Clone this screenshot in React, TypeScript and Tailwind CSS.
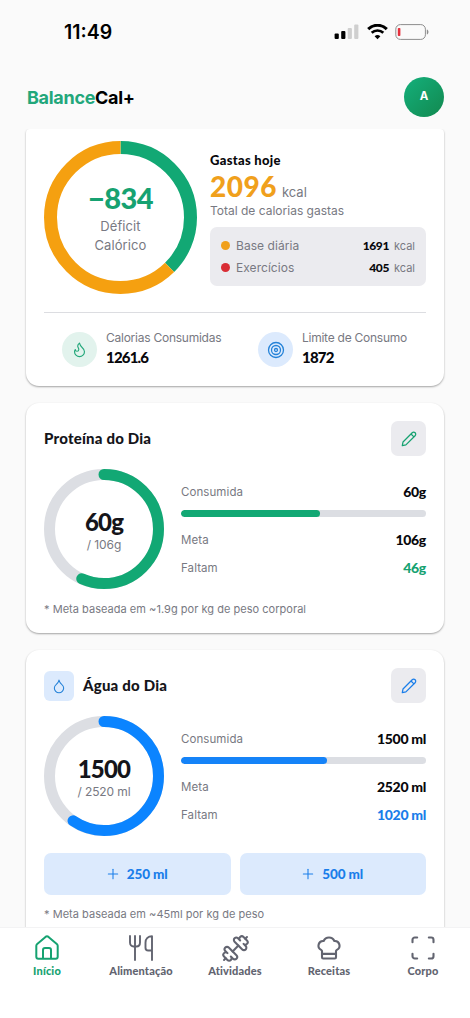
import { FC, ReactNode } from 'react'
import { ChefHat, Droplet, Dumbbell, Flame, Plus, Scan, Target } from 'lucide-react'
import clsx from 'clsx'

interface RingSegment {
  color: string
  from: number
  to: number
}

interface RingProps {
  size: number
  stroke: number
  segments: RingSegment[]
  track?: string
  rounded?: boolean
  children: ReactNode
}

const Ring: FC<RingProps> = ({ size, stroke, segments, track, rounded, children }) => {
  const radius = (size - stroke) / 2
  const length = 2 * Math.PI * radius

  return (
    <div className="relative shrink-0">
      <svg width={size} height={size} className="block -rotate-90">
        {track && <circle cx={size / 2} cy={size / 2} r={radius} fill="none" stroke={track} strokeWidth={stroke} />}
        {segments.map(segment => (
          <circle
            key={segment.color}
            cx={size / 2}
            cy={size / 2}
            r={radius}
            fill="none"
            stroke={segment.color}
            strokeWidth={stroke}
            strokeLinecap={rounded ? 'round' : 'butt'}
            strokeDasharray={`${(segment.to - segment.from) * length} ${length}`}
            strokeDashoffset={-segment.from * length}
          />
        ))}
      </svg>
      <div className="absolute inset-0 flex flex-col items-center justify-center">{children}</div>
    </div>
  )
}

const PencilIcon: FC = () => (
  <svg width="18" height="18" viewBox="0 0 18 18" fill="none" stroke="currentColor" strokeWidth="1.25" strokeLinejoin="round">
    <path d="M2.3 15.7l.7-3.7L12.2 2.8a2.05 2.05 0 0 1 2.9 2.9L5.9 14.9zM11 4l2.9 2.9" />
  </svg>
)

const HomeIcon: FC = () => (
  <svg width="26" height="26" viewBox="0 0 26 26" fill="none" stroke="currentColor" strokeWidth="2" strokeLinejoin="round">
    <path d="M2.3 10.8c0-.8.3-1.4.9-1.9l8.3-7c.9-.7 2.1-.7 3 0l8.3 7c.6.5.9 1.1.9 1.9v11a2 2 0 0 1-2 2H4.3a2 2 0 0 1-2-2z" />
    <path d="M9 23.8v-8.8a2 2 0 0 1 2-2h4a2 2 0 0 1 2 2v8.8" />
  </svg>
)

const CutleryIcon: FC = () => (
  <svg width="26" height="26" viewBox="0 0 26 26" fill="none" stroke="currentColor" strokeWidth="1.9" strokeLinecap="round" strokeLinejoin="round">
    <path d="M2 1v6.5c0 2.4 1.5 4 3.6 4h2.8c2.1 0 3.6-1.6 3.6-4V1M7 1v24" />
    <path d="M24 25V1.2c-3.8 0-6.5 2.5-6.5 6.5v5c0 1.7 1 2.8 2.7 2.8H24" />
  </svg>
)

const StatusBar: FC = () => (
  <div className="flex h-[66px] shrink-0 items-center justify-between pl-16 pr-10 pb-px">
    <span className="text-[19.5px] font-semibold tracking-[0px] text-black">11:49</span>
    <div className="flex items-center gap-2 pb-0.5">
      <svg width="25" height="16" viewBox="0 0 25 16">
        <rect x="0.6" y="9.5" width="4.2" height="5.5" rx="1" fill="#000" />
        <rect x="7.2" y="7" width="4.2" height="8" rx="1" fill="#000" />
        <rect x="13.7" y="4" width="4.2" height="11" rx="1" fill="#cfcfcf" />
        <rect x="20.2" y="0.5" width="4.2" height="14.5" rx="1" fill="#cfcfcf" />
      </svg>
      <svg width="21" height="16" viewBox="0 0 21 16" fill="none" stroke="#000">
        <path d="M1.2 5.1a13.2 13.2 0 0 1 18.6 0" strokeWidth="3" />
        <path d="M4.7 8.8a8.4 8.4 0 0 1 11.6 0" strokeWidth="2.7" />
        <path d="M10.5 15.2l-2.9-2.9a4.2 4.2 0 0 1 5.8 0z" fill="#000" stroke="none" />
      </svg>
      <svg width="35" height="16" viewBox="0 0 35 16" className="-ml-px">
        <rect x="0.8" y="0.6" width="29.6" height="14.8" rx="4.6" fill="none" stroke="#8d8d8d" />
        <rect x="2.8" y="4" width="2.6" height="8" rx="0.8" fill="#e5303c" />
        <path d="M31.8 5.5c2.2.6 2.2 4.4 0 5z" fill="#8d8d8d" />
      </svg>
    </div>
  </div>
)

interface ExpenseProps {
  color: string
  label: string
  value: string
}

const Expense: FC<ExpenseProps> = ({ color, label, value }) => (
  <div className="flex h-[22px] items-center">
    <span className={clsx('mr-[6px] size-[9px] rounded-full', color)} />
    <span className="grow text-xs tracking-[0.05px] text-[#787982]">{label}</span>
    <span className="mr-[5px] font-['Lato',sans-serif] text-xs font-black tracking-[-0.4px] text-[#08080c]">{value}</span>
    <span className="pt-px text-[11px] tracking-[0px] text-[#787982]">kcal</span>
  </div>
)

interface StatProps {
  icon: ReactNode
  iconClass: string
  label: string
  value: string
}

const Stat: FC<StatProps> = ({ icon, iconClass, label, value }) => (
  <div className="flex w-[196px] shrink-0 items-center gap-[9px]">
    <span className={clsx('flex size-[35px] items-center justify-center rounded-full', iconClass)}>{icon}</span>
    <div className="-mt-[3px]">
      <p className="text-[12px] leading-[18px] tracking-[-0.25px] text-[#787982]">{label}</p>
      <p className="font-['Lato',sans-serif] text-[15px] leading-5 font-black tracking-[-0.8px] text-[#08080c]">{value}</p>
    </div>
  </div>
)

const BalanceCard: FC = () => (
  <section className="h-[257px] shrink-0 rounded-t-[4px] rounded-b-[13px] bg-white px-[18px] pt-3 shadow-[0_1px_2px_rgba(0,0,0,0.35)]">
    <div className="flex gap-[13px]">
      <Ring
        size={153}
        stroke={13}
        segments={[
          { color: '#12a874', from: 0, to: 0.3757 },
          { color: '#f5a010', from: 0.3757, to: 1 },
        ]}>
        <span className="mt-[2px] font-['Lato',sans-serif] text-[29px] leading-[32px] font-black tracking-[-0.6px] text-[#16a271]">
          −834
        </span>
        <span className="mt-[3px] text-center text-[13px] leading-[19px] tracking-[0.1px] text-[#787982]">
          Déficit
          <br />
          Calórico
        </span>
      </Ring>
      <div className="grow pt-2.5">
        <h2 className="font-['Lato',sans-serif] text-[13px] leading-[18px] font-black tracking-[0.3px] text-[#08080c]">
          Gastas hoje
        </h2>
        <p className="flex h-[33px] items-baseline gap-[5px]">
          <span className="font-['Lato',sans-serif] text-[28px] leading-[34px] font-black tracking-[0.5px] text-[#f0a01c]">2096</span>
          <span className="text-[13px] tracking-[0px] text-[#787982]">kcal</span>
        </p>
        <p className="text-xs leading-[18px] tracking-[0px] text-[#787982]">Total de calorias gastas</p>
        <div className="mt-[7px] h-[59px] rounded-[7px] bg-[#ebebef] px-[11px] py-[7.5px]">
          <Expense color="bg-[#f0a01c]" label="Base diária" value="1691" />
          <Expense color="bg-[#d92d35]" label="Exercícios" value="405" />
        </div>
      </div>
    </div>
    <div className="mt-[18px] flex border-t border-[#dcdde1] pt-[19px] pl-[18px]">
      <Stat
        icon={<Flame size={17} strokeWidth={1.6} />}
        iconClass="bg-[#e2f3ed] text-[#22a77a]"
        label="Calorias Consumidas"
        value="1261.6"
      />
      <Stat
        icon={<Target size={18} strokeWidth={1.7} />}
        iconClass="bg-[#dceafd] text-[#2482d8]"
        label="Limite de Consumo"
        value="1872"
      />
    </div>
  </section>
)

interface GoalRowProps {
  label: string
  value: string
  valueClass?: string
}

const GoalRow: FC<GoalRowProps> = ({ label, value, valueClass = 'text-[#08080c]' }) => (
  <div className="flex h-7 items-center justify-between">
    <span className="pt-px text-[11.5px] tracking-[0.08px] text-[#787982]">{label}</span>
    <span className={clsx("pb-[2px] font-['Lato',sans-serif] text-[14px] font-black tracking-[-0.3px]", valueClass)}>
      {value}
    </span>
  </div>
)

interface GoalProps {
  color: string
  barClass: string
  accentClass: string
  value: number
  goal: number
  unit: string
  ringValue: string
  ringGoal: string
}

const Goal: FC<GoalProps> = ({ color, barClass, accentClass, value, goal, unit, ringValue, ringGoal }) => (
  <div className="mt-[13px] flex gap-[17px]">
    <Ring size={120} stroke={11} track="#dcdee3" rounded segments={[{ color, from: 0, to: value / goal }]}>
      <span className="mt-[5px] font-['Lato',sans-serif] text-[24px] leading-[26px] font-black tracking-[-0.8px] text-[#15151a]">
        {ringValue}
      </span>
      <span className="mt-px text-[12px] leading-[18px] tracking-[-0.1px] text-[#787982]">{ringGoal}</span>
    </Ring>
    <div className="grow pt-[9px]">
      <GoalRow label="Consumida" value={`${value}${unit}`} />
      <div className="mt-[4px] mb-[9.5px] h-[6.5px] overflow-hidden rounded-full bg-[#dcdee3]">
        <div className={clsx('h-full rounded-full', barClass)} style={{ width: `${(value / goal) * 100}%` }} />
      </div>
      <GoalRow label="Meta" value={`${goal}${unit}`} />
      <GoalRow label="Faltam" value={`${goal - value}${unit}`} valueClass={accentClass} />
    </div>
  </div>
)

const ProteinCard: FC = () => (
  <section className="mt-[17px] h-[230px] shrink-0 rounded-[13px] bg-white px-[18px] pt-[18px] shadow-[0_1px_2px_rgba(0,0,0,0.35)]">
    <div className="flex items-center justify-between">
      <h2 className="font-['Lato',sans-serif] text-[15px] font-black tracking-[0.2px] text-[#15151a]">Proteína do Dia</h2>
      <button className="flex size-[35px] items-center justify-center rounded-[7px] bg-[#ebebef] text-[#16a271]">
        <PencilIcon />
      </button>
    </div>
    <Goal
      color="#12a874"
      barClass="bg-[#12a874]"
      accentClass="text-[#16a271]"
      value={60}
      goal={106}
      unit="g"
      ringValue="60g"
      ringGoal="/ 106g"
    />
    <p className="mt-[11px] text-[11px] leading-[18px] tracking-[0.03px] text-[#787982]">
      * Meta baseada em ~1.9g por kg de peso corporal
    </p>
  </section>
)

const WaterCard: FC = () => (
  <section className="mt-[17px] h-[320px] shrink-0 rounded-[13px] bg-white px-[18px] pt-[18px] shadow-[0_1px_2px_rgba(0,0,0,0.35)]">
    <div className="flex items-center">
      <span className="flex size-[30px] items-center justify-center rounded-[6px] bg-[#dceafd] text-[#2482d8]">
        <Droplet size={16} strokeWidth={1.6} />
      </span>
      <h2 className="ml-[9px] grow font-['Lato',sans-serif] text-[15px] font-black tracking-[0.2px] text-[#15151a]">Água do Dia</h2>
      <button className="flex size-[35px] items-center justify-center rounded-[7px] bg-[#ebebef] text-[#1a7eea]">
        <PencilIcon />
      </button>
    </div>
    <Goal
      color="#0b84ff"
      barClass="bg-[#1583f8]"
      accentClass="text-[#1a7eea]"
      value={1500}
      goal={2520}
      unit=" ml"
      ringValue="1500"
      ringGoal="/ 2520 ml"
    />
    <div className="mt-[17px] grid grid-cols-2 gap-[9px]">
      {['250 ml', '500 ml'].map(amount => (
        <button
          key={amount}
          className="flex h-[42px] items-center justify-center gap-[6px] rounded-[7px] bg-[#dceafd] pr-0.5 font-['Lato',sans-serif] text-[13.5px] font-black tracking-[-0.1px] text-[#1a7eea]">
          <Plus size={16} strokeWidth={1.6} />
          {amount}
        </button>
      ))}
    </div>
    <p className="mt-[10px] text-[11px] leading-[18px] tracking-[0.03px] text-[#787982]">* Meta baseada em ~45ml por kg de peso</p>
  </section>
)

const NAV_ITEMS = [
  { label: 'Início', icon: <HomeIcon />, active: true },
  { label: 'Alimentação', icon: <CutleryIcon /> },
  { label: 'Atividades', icon: <Dumbbell size={29} strokeWidth={1.7} /> },
  { label: 'Receitas', icon: <ChefHat size={28} strokeWidth={1.8} /> },
  { label: 'Corpo', icon: <Scan size={28} strokeWidth={1.8} /> },
]

const App: FC = () => (
  <div className="flex h-[1018px] w-[470px] flex-col overflow-hidden bg-[#fafafa] font-['Inter',sans-serif]">
    <StatusBar />
    <header className="flex h-[63px] shrink-0 items-center justify-between pr-[26px] pb-px pl-[27px]">
      <h1 className="text-[18px] font-bold tracking-[-0.3px] text-black">
        <span className="text-[#22a77a]">Balance</span>Cal+
      </h1>
      <span className="flex size-[40px] items-center justify-center rounded-full bg-linear-to-br from-[#14b07c] to-[#12894f] text-[11.5px] font-bold text-white">
        A
      </span>
    </header>
    <main className="flex h-[798px] shrink-0 flex-col overflow-hidden px-[26px]">
      <BalanceCard />
      <ProteinCard />
      <WaterCard />
    </main>
    <nav className="grid grow grid-cols-5 border-t border-[#f3f3f4] bg-white pt-[6px]">
      {NAV_ITEMS.map(item => (
        <a key={item.label} className={clsx('flex flex-col items-center', item.active ? 'text-[#16a271]' : 'text-[#626470]')}>
          <span className="flex h-7 items-center">{item.icon}</span>
          <span className="mt-px font-['Lato',sans-serif] text-[11px] leading-4 font-black tracking-[0.15px]">{item.label}</span>
        </a>
      ))}
    </nav>
  </div>
)

export default App
